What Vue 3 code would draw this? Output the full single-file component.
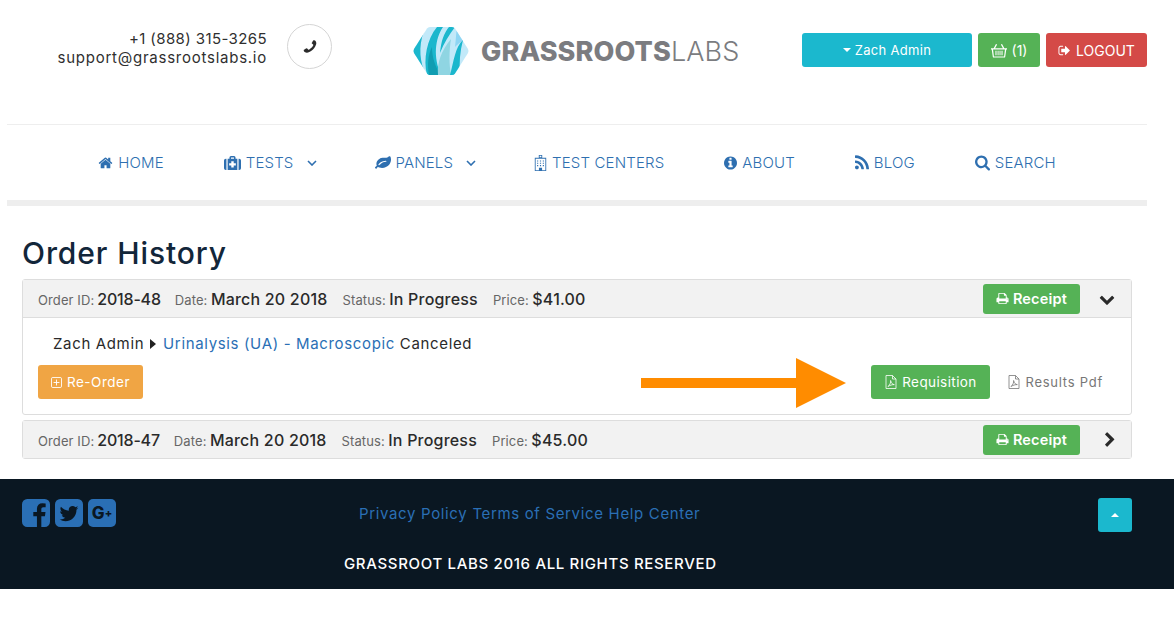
<template>
  <div class="page">
    <header class="top">
      <div class="contact">
        <div class="contact-text">
          <div class="contact-phone">+1 (888) 315-3265</div>
          <div class="contact-mail">support@grassrootslabs.io</div>
        </div>
        <span class="phone-circle">
          <svg class="phone-icon" viewBox="0 0 1792 1792"><path transform="matrix(-1 0 0 1 1792 0)" :d="icons.phone" /></svg>
        </span>
      </div>

      <div class="logo">
        <svg class="logo-mark" viewBox="0 0 56 48">
          <defs>
            <clipPath id="hexclip">
              <path d="M14 1.5 Q15 0 17 0 H39 Q41 0 42 1.5 L55 22 Q56 24 55 26 L42 46.5 Q41 48 39 48 H17 Q15 48 14 46.5 L1 26 Q0 24 1 22 Z" />
            </clipPath>
          </defs>
          <g clip-path="url(#hexclip)">
            <rect width="56" height="48" fill="#c2e9f9" />
            <path d="M0 48 V18 L11 4 C5 20 7 36 13 48 Z" fill="#1bb7cd" />
            <path d="M24 0 H30 C22 12 20 30 28 48 H14 C10 32 14 12 24 0 Z" fill="#1bb7cd" />
            <path d="M16 48 C14 38 15 28 19 20 C19 30 22 40 28 48 Z" fill="#119db2" />
            <path d="M25 48 C24 36 28 24 38 12 C36 24 36 38 38 48 Z" fill="#8fd5e2" />
            <path d="M36 0 H42 C36 8 31 16 27 26 C28 14 31 6 36 0 Z" fill="#1bb7cd" />
            <path d="M44 0 H50 L56 14 C50 12 46 16 42 20 C43 12 43 6 44 0 Z" fill="#8ed5f3" />
            <path d="M37 48 C41 34 42 20 50 13 C47 24 46 36 47 48 Z" fill="#1bb7cd" />
          </g>
        </svg>
        <span class="logo-text"><b>GRASSROOTS</b>LABS</span>
      </div>

      <div class="top-actions">
        <a class="btn btn-info user-btn"><i class="caret-down"></i>Zach Admin</a>
        <a class="btn btn-green cart-btn">
          <svg class="ico15" viewBox="0 0 18 16"><path fill="currentColor" d="M5.6 0.6 L6.9 1.2 L4.6 5.6 H13.4 L11.1 1.2 L12.4 0.6 L15 5.6 H18 V7 H17.2 L16 15 Q15.9 16 15 16 H3 Q2.1 16 2 15 L0.8 7 H0 V5.6 H3 Z M2.3 7 L3.3 14.7 H14.7 L15.7 7 Z M5 8.2 H6.2 V13.4 H5 Z M7.4 8.2 H8.5 V13.4 H7.4 Z M9.6 8.2 H10.7 V13.4 H9.6 Z M11.8 8.2 H13 V13.4 H11.8 Z" /></svg>
          (1)
        </a>
        <a class="btn btn-red logout-btn">
          <svg class="ico13" viewBox="0 0 1792 1792"><path fill="currentColor" :d="icons.signOut" /></svg>
          LOGOUT
        </a>
      </div>
    </header>

    <nav class="nav">
      <a v-for="item in navItems" :key="item.label" class="nav-item">
        <svg :width="item.w" height="16" :viewBox="item.box || '0 0 1792 1792'"><path fill="currentColor" fill-rule="evenodd" :d="item.icon" /></svg>
        <span>{{ item.label }}</span>
        <svg v-if="item.sub" class="nav-chevron" viewBox="0 0 10 6"><path d="M1 1 L5 5 L9 1" fill="none" stroke="currentColor" stroke-width="1.6" /></svg>
      </a>
    </nav>

    <main class="content">
      <h1>Order History</h1>

      <section class="order">
        <div class="order-head">
          <span class="meta meta-id"><small>Order ID:</small> 2018-48</span>
          <span class="meta"><small>Date:</small> March 20 2018</span>
          <span class="meta"><small>Status:</small> In Progress</span>
          <span class="meta"><small>Price:</small> $41.00</span>
          <a class="btn btn-green receipt">
            <svg class="ico13" viewBox="0 0 1792 1792"><path fill="currentColor" :d="icons.print" /></svg>
            Receipt
          </a>
          <svg class="toggle" viewBox="0 0 1792 1792"><path fill="currentColor" :d="icons.chevronDown" /></svg>
        </div>
        <div class="order-body">
          <p class="line">
            Zach Admin
            <i class="caret-right"></i>
            <a class="test-link">Urinalysis (UA) - Macroscopic</a>
            Canceled
          </p>
          <div class="actions">
            <a class="btn btn-orange reorder">
              <svg class="ico11" viewBox="0 0 12 12"><rect x="0.5" y="0.5" width="11" height="11" rx="1.5" fill="none" stroke="currentColor" /><path d="M6 2.8 V9.2 M2.8 6 H9.2" stroke="currentColor" /></svg>
              Re-Order
            </a>
            <a class="btn btn-green requisition">
              <svg class="ico-file" viewBox="0 0 12 14"><path :d="filePath" fill="none" stroke="currentColor" stroke-width="0.8" /></svg>
              Requisition
            </a>
            <a class="results">
              <svg class="ico-file" viewBox="0 0 12 14"><path :d="filePath" fill="none" stroke="currentColor" stroke-width="0.8" /></svg>
              Results Pdf
            </a>
          </div>
          <svg class="arrow" viewBox="0 0 205 50"><path d="M0 20 H155 V0 L205 25 L155 50 V30 H0 Z" fill="#ff8c00" /></svg>
        </div>
      </section>

      <section class="order">
        <div class="order-head">
          <span class="meta meta-id"><small>Order ID:</small> 2018-47</span>
          <span class="meta"><small>Date:</small> March 20 2018</span>
          <span class="meta"><small>Status:</small> In Progress</span>
          <span class="meta"><small>Price:</small> $45.00</span>
          <a class="btn btn-green receipt">
            <svg class="ico13" viewBox="0 0 1792 1792"><path fill="currentColor" :d="icons.print" /></svg>
            Receipt
          </a>
          <svg class="toggle toggle-right" viewBox="0 0 1792 1792"><path fill="currentColor" :d="icons.chevronRight" /></svg>
        </div>
      </section>
    </main>

    <footer class="footer">
      <div class="footer-row">
        <div class="social">
          <svg class="social-icon" viewBox="128 128 1536 1536"><path fill="currentColor" :d="icons.facebook" /></svg>
          <svg class="social-icon" viewBox="128 128 1536 1536"><path fill="currentColor" :d="icons.twitter" /></svg>
          <span class="gplus">G<sup>+</sup></span>
        </div>
        <div class="footer-links">
          <a>Privacy Policy</a>
          <a>Terms of Service</a>
          <a>Help Center</a>
        </div>
        <a class="btn btn-info to-top"><i class="caret-up"></i></a>
      </div>
      <p class="copyright">GRASSROOT LABS 2016 ALL RIGHTS RESERVED</p>
    </footer>
  </div>
</template>

<script setup>
const icons = {
  phone: 'M1600 1240q0 27-10 70.5t-21 68.5q-21 50-122 106-94 51-186 51-27 0-53-3.5t-57.5-12.5-47-14.5-55.5-20.5-49-18q-98-35-175-83-127-79-264-216t-216-264q-48-77-83-175-3-9-18-49t-20.5-55.5-14.5-47-12.5-57.5-3.5-53q0-92 51-186 56-101 106-122 25-11 68.5-21t70.5-10q14 0 21 3 18 6 53 76 11 19 30 54t35 63.5 31 53.5q3 4 17.5 25t21.5 35.5 7 28.5q0 20-28.5 50t-62 55-62 53-28.5 46q0 9 5 22.5t8.5 20.5 14 24 11.5 19q76 137 174 235t235 174q2 1 19 11.5t24 14 20.5 8.5 22.5 5q18 0 46-28.5t53-62 55-62 50-28.5q14 0 28.5 7t35.5 21.5 25 17.5q25 15 53.5 31t63.5 35 54 30q70 35 76 53 3 7 3 21z',
  signOut: 'M704 1440q0 4 1 20t.5 26.5-3 23.5-10 19.5-20.5 6.5h-320q-119 0-203.5-84.5t-84.5-203.5v-704q0-119 84.5-203.5t203.5-84.5h320q13 0 22.5 9.5t9.5 22.5q0 4 1 20t.5 26.5-3 23.5-10 19.5-20.5 6.5h-320q-66 0-113 47t-47 113v704q0 66 47 113t113 47h312l11.5 1 11.5 3 8 5.5 7 9 2 13.5zm928-544q0 26-19 45l-544 544q-19 19-45 19t-45-19-19-45v-288h-448q-26 0-45-19t-19-45v-384q0-26 19-45t45-19h448v-288q0-26 19-45t45-19 45 19l544 544q19 19 19 45z',
  print: 'M448 1536h896v-256h-896v256zm0-640h896v-384h-160q-40 0-68-28t-28-68v-160h-640v640zm1152 64q0-26-19-45t-45-19-45 19-19 45 19 45 45 19 45-19 19-45zm128 0v416q0 13-9.5 22.5t-22.5 9.5h-224v160q0 40-28 68t-68 28h-960q-40 0-68-28t-28-68v-160h-224q-13 0-22.5-9.5t-9.5-22.5v-416q0-79 56.5-135.5t135.5-56.5h64v-544q0-40 28-68t68-28h672q40 0 88 20t76 48l152 152q28 28 48 76t20 88v256h64q79 0 135.5 56.5t56.5 135.5z',
  chevronDown: 'M1683 808l-742 741q-19 19-45 19t-45-19l-742-741q-19-19-19-45.5t19-45.5l166-165q19-19 45-19t45 19l531 531 531-531q19-19 45-19t45 19l166 165q19 19 19 45.5t-19 45.5z',
  chevronRight: 'M1363 877l-742 742q-19 19-45 19t-45-19l-166-166q-19-19-19-45t19-45l531-531-531-531q-19-19-19-45t19-45l166-166q19-19 45-19t45 19l742 742q19 19 19 45t-19 45z',
  facebook: 'M1376 128q119 0 203.5 84.5t84.5 203.5v960q0 119-84.5 203.5t-203.5 84.5h-188v-595h199l30-232h-229v-148q0-56 23.5-84t91.5-28l122-1v-207q-63-9-178-9-136 0-217.5 80t-81.5 226v171h-200v232h200v595h-532q-119 0-203.5-84.5t-84.5-203.5v-960q0-119 84.5-203.5t203.5-84.5h960z',
  twitter: 'M1408 610q-56 25-121 34 68-40 93-117-65 38-134 51-61-66-153-66-87 0-148.5 61.5t-61.5 148.5q0 29 5 48-129-7-242-65t-192-155q-29 50-29 106 0 114 91 175-47-1-100-26v2q0 75 50 133.5t123 72.5q-29 8-51 8-13 0-39-4 21 63 74.5 104t121.5 42q-116 90-261 90-26 0-50-3 148 94 322 94 112 0 210-35.5t168-95 120.5-137 75-162 24.5-168.5q0-18-1-27 63-45 105-109zm256-194v960q0 119-84.5 203.5t-203.5 84.5h-960q-119 0-203.5-84.5t-84.5-203.5v-960q0-119 84.5-203.5t203.5-84.5h960q119 0 203.5 84.5t84.5 203.5z'
}

const filePath = 'M1 0.5 H7.5 L11 4 V13.5 H1 Z M7.5 0.5 V4 H11 M3 11.5 C5 10 6 7 5.6 5.5 C6 8 7.5 9.5 9.3 9.6 C7 9.6 5 10.2 3 11.5 Z'

const navItems = [
  { label: 'HOME', w: 15, icon: 'M1472 992v480q0 26-19 45t-45 19h-384v-384h-256v384h-384q-26 0-45-19t-19-45v-480q0-1 .5-3t.5-3l575-474 575 474q1 2 1 6zm223-69l-62 74q-8 9-21 11h-3q-13 0-21-7l-692-577-692 577q-12 8-24 7-13-2-21-11l-62-74q-8-10-7-23.5t11-21.5l719-599q32-26 76-26t76 26l244 204v-195q0-14 9-23t23-9h192q14 0 23 9t9 23v408l219 182q10 8 11 21.5t-7 23.5z' },
  { label: 'TESTS', sub: true, w: 17, box: '0 96 1792 1600', icon: 'M576 320 Q576 160 736 160 H1056 Q1216 160 1216 320 V448 H1056 V320 H736 V448 H576 Z M384 448 H1408 V1632 H384 Z M768 704 V928 H544 V1152 H768 V1376 H1024 V1152 H1248 V928 H1024 V704 Z M256 448 V1632 H192 Q0 1632 0 1440 V640 Q0 448 192 448 Z M1536 448 H1600 Q1792 448 1792 640 V1440 Q1792 1632 1600 1632 H1536 Z' },
  { label: 'PANELS', sub: true, w: 16, icon: 'M1280 704q0-26-19-45t-45-19q-172 0-318 49.5t-259.5 134-235.5 219.5q-19 21-19 45 0 26 19 45t45 19q24 0 45-19 27-24 74-71t67-66q137-124 268.5-176t313.5-52q26 0 45-19t19-45zm512-198q0 95-20 193-46 224-184.5 383t-357.5 268q-214 108-438 108-148 0-286-47-15-5-88-42t-96-37q-16 0-39.5 32t-45 70-52.5 70-60 32q-43 0-63.5-17.5t-45.5-59.5q-2-4-6-11t-5.5-10-3-9.5-1.5-13.5q0-35 31-73.5t68-65.5 68-56 31-48q0-4-14-38t-16-44q-9-51-9-104 0-115 43.5-220t119-184.5 170.5-139 204-95.5q55-18 145-25.5t179.5-9 178.5-6 163.5-24 113.5-56.5l29.5-29.5 29.5-28 27-20 36.5-16 43.5-4.5q39 0 70.5 46t47.5 112 24 124 8 96z' },
  { label: 'TEST CENTERS', w: 13, box: '256 0 1280 1792', icon: 'M704 0 H1088 V320 H1536 V1792 H256 V320 H704 Z M800 96 V256 H992 V96 Z M352 416 V1696 H720 V1440 H1072 V1696 H1440 V416 Z M512 608 H640 V736 H512 Z M832 608 H960 V736 H832 Z M1152 608 H1280 V736 H1152 Z M512 864 H640 V992 H512 Z M832 864 H960 V992 H832 Z M1152 864 H1280 V992 H1152 Z M512 1120 H640 V1248 H512 Z M832 1120 H960 V1248 H832 Z M1152 1120 H1280 V1248 H1152 Z' },
  { label: 'ABOUT', w: 13, box: '128 128 1536 1536', icon: 'M1152 1376v-160q0-14-9-23t-23-9h-96v-512q0-14-9-23t-23-9h-320q-14 0-23 9t-9 23v160q0 14 9 23t23 9h96v320h-96q-14 0-23 9t-9 23v160q0 14 9 23t23 9h448q14 0 23-9t9-23zm-128-896v-160q0-14-9-23t-23-9h-192q-14 0-23 9t-9 23v160q0 14 9 23t23 9h192q14 0 23-9t9-23zm640 416q0 209-103 385.5t-279.5 279.5-385.5 103-385.5-103-279.5-279.5-103-385.5 103-385.5 279.5-279.5 385.5-103 385.5 103 279.5 279.5 103 385.5z' },
  { label: 'BLOG', w: 14, box: '192 256 1408 1280', icon: 'M576 1344q0 80-56 136t-136 56-136-56-56-136 56-136 136-56 136 56 56 136zm512 123q2 28-17 48-18 21-47 21h-135q-25 0-43-16.5t-20-41.5q-22-229-184.5-391.5t-391.5-184.5q-25-2-41.5-20t-16.5-43v-135q0-29 21-47 17-17 43-17h5q160 13 306 80.5t259 181.5q114 113 181.5 259t80.5 306zm512 2q2 27-18 47-18 20-46 20h-143q-26 0-44.5-17.5t-19.5-42.5q-12-215-101-408.5t-231.5-336-336-231.5-408.5-102q-25-1-42.5-19.5t-17.5-43.5v-143q0-28 20-46 18-18 44-18h3q262 13 501.5 120t425.5 294q187 186 294 425.5t120 501.5z' },
  { label: 'SEARCH', w: 15, box: '64 128 1664 1664', icon: 'M1216 832q0-185-131.5-316.5t-316.5-131.5-316.5 131.5-131.5 316.5 131.5 316.5 316.5 131.5 316.5-131.5 131.5-316.5zm512 832q0 52-38 90t-90 38q-54 0-90-38l-343-342q-179 124-399 124-143 0-273.5-55.5t-225-150-150-225-55.5-273.5 55.5-273.5 150-225 225-150 273.5-55.5 273.5 55.5 225 150 150 225 55.5 273.5q0 220-124 399l343 343q37 37 37 90z' }
]
</script>

<style>
html, body {
  margin: 0;
  background: #fff;
}
</style>

<style scoped>
.page {
  min-height: 644px;
  background: #fff;
  font-family: Inter, "Open Sans", sans-serif;
  color: #2b2b2b;
}
a {
  text-decoration: none;
}

/* top bar */
.top {
  display: flex;
  align-items: flex-start;
  height: 124px;
  margin: 0 27px 0 7px;
  border-bottom: 1px solid #eee;
}
.contact {
  display: flex;
  align-items: flex-start;
  width: 325px;
  margin-top: 24px;
  justify-content: flex-end;
  gap: 20px;
}
.contact-text {
  padding-top: 5px;
  text-align: right;
  font-size: 15px;
  line-height: 19px;
  color: #2f2f2f;
}
.contact-phone {
  letter-spacing: 0.4px;
}
.contact-mail {
  letter-spacing: 0.75px;
}
.phone-circle {
  display: flex;
  align-items: center;
  justify-content: center;
  width: 43px;
  height: 43px;
  border: 1px solid #d5d5d5;
  border-radius: 50%;
}
.phone-icon {
  width: 16px;
  height: 16px;
  fill: #2b2b2b;
}
.logo {
  display: flex;
  align-items: center;
  gap: 12px;
  margin: 27px 0 0 81px;
}
.logo-mark {
  width: 56px;
  height: 48px;
}
.logo-text {
  font-size: 27px;
  font-weight: 300;
  color: #7b7c80;
  letter-spacing: 0.1px;
}
.logo-text b {
  font-weight: 800;
}
.top-actions {
  display: flex;
  gap: 6px;
  margin: 33px 0 0 auto;
}

/* buttons */
.btn {
  display: inline-flex;
  align-items: center;
  justify-content: center;
  gap: 5px;
  box-sizing: border-box;
  height: 34px;
  border-radius: 3px;
  color: #fff;
  font-size: 13px;
}
.btn-info {
  background: #1bb8ce;
}
.btn-green {
  background: #55b256;
}
.btn-red {
  background: #d44a47;
}
.btn-orange {
  background: #f0a544;
}
.user-btn {
  width: 170px;
  letter-spacing: 0.3px;
}
.cart-btn {
  width: 62px;
  font-size: 14px;
}
.logout-btn {
  width: 101px;
  font-size: 14px;
}
.ico15 {
  width: 16px;
  height: 15px;
}
.ico13 {
  width: 13px;
  height: 13px;
}
.ico11 {
  width: 11px;
  height: 11px;
}
.ico-file {
  width: 12px;
  height: 14px;
}
.caret-down {
  display: inline-block;
  border-left: 4px solid transparent;
  border-right: 4px solid transparent;
  border-top: 4px solid #fff;
  margin-right: -1px;
}
.caret-right {
  display: inline-block;
  border-top: 5px solid transparent;
  border-bottom: 5px solid transparent;
  border-left: 6px solid #222;
  margin: 0 7px 0 1px;
}
.caret-up {
  display: inline-block;
  border-left: 4px solid transparent;
  border-right: 4px solid transparent;
  border-bottom: 4px solid #fff;
}

/* nav */
.nav {
  display: flex;
  justify-content: center;
  align-items: center;
  height: 75px;
  margin: 0 27px 0 7px;
  border-bottom: 6px solid #eee;
}
.nav-item {
  display: flex;
  align-items: center;
  gap: 5px;
  padding: 0 30px;
  color: #2e6fb0;
  font-size: 15px;
  font-weight: 300;
  letter-spacing: 0.15px;
}
.nav-chevron {
  width: 10px;
  height: 6px;
  margin: 0 -2px 0 8px;
}

/* orders */
.content {
  padding: 0 42px 15px 22px;
}
h1 {
  margin: 0;
  padding: 29px 0 7px;
  font-size: 30px;
  line-height: 37px;
  font-weight: 500;
  letter-spacing: 0.9px;
  color: #12263a;
}
.order {
  border: 1px solid #ddd;
  border-radius: 3px;
  margin-bottom: 5px;
}
.order-head {
  display: flex;
  align-items: center;
  gap: 15px;
  height: 37px;
  padding: 0 15px;
  background: #f2f2f2;
  font-size: 16px;
  font-weight: 500;
  letter-spacing: 0.2px;
  color: #2a2a2a;
}
.order-body {
  position: relative;
  border-top: 1px solid #ddd;
  padding: 15px;
  height: 66px;
}
.meta small {
  font-size: 13px;
  font-weight: 400;
  letter-spacing: 0.1px;
  color: #666;
  margin-right: -1px;
}
.meta-id {
  letter-spacing: -0.2px;
  margin-right: -1px;
}
.receipt {
  margin-left: auto;
  width: 97px;
  height: 30px;
  gap: 4px;
  font-size: 14.5px;
  font-weight: 600;
}
.toggle {
  width: 16px;
  height: 16px;
  margin: 0 1px 0 4px;
  color: #2a2a2a;
}
.toggle-right {
  margin: 0 -2px 0 7px;
}
.line {
  margin: 1px 0 11px 15px;
  font-size: 15px;
  line-height: 20px;
  letter-spacing: 0.65px;
  color: #2a2a2a;
}
.test-link {
  color: #2a6fb5;
}
.actions {
  display: flex;
  align-items: center;
}
.reorder {
  width: 105px;
  font-size: 13.5px;
  letter-spacing: 0.5px;
}
.requisition {
  width: 119px;
  margin-left: auto;
  margin-right: 18px;
  font-size: 13.5px;
  letter-spacing: 0.4px;
}
.results {
  display: inline-flex;
  align-items: center;
  gap: 5px;
  color: #777;
  font-size: 13px;
  letter-spacing: 0.75px;
  margin-right: 13px;
}
.arrow {
  position: absolute;
  left: 618px;
  top: 40px;
  width: 205px;
  height: 50px;
}

/* footer */
.footer {
  height: 110px;
  background: #0a1722;
  box-sizing: border-box;
  padding: 19px 42px 0 22px;
}
.footer-row {
  display: flex;
  align-items: flex-start;
}
.social {
  display: flex;
  gap: 5px;
  width: 337px;
  margin-top: 1px;
}
.social-icon {
  width: 28px;
  height: 28px;
  color: #2a6fb5;
}
.gplus {
  display: flex;
  align-items: center;
  justify-content: center;
  width: 28px;
  height: 28px;
  border-radius: 5px;
  background: #2a6fb5;
  color: #0a1722;
  font-size: 17px;
  font-weight: 800;
}
.gplus sup {
  font-size: 11px;
  line-height: 1;
}
.footer-links {
  display: flex;
  gap: 5px;
  margin-top: 1px;
  font-size: 15px;
  line-height: 30px;
  letter-spacing: 0.65px;
  color: #2a6fb5;
}
.to-top {
  width: 34px;
  margin-left: auto;
}
.copyright {
  margin: 22px 0 0 322px;
  font-size: 15px;
  line-height: 20px;
  font-weight: 500;
  color: #fff;
  letter-spacing: 0.66px;
}
</style>
